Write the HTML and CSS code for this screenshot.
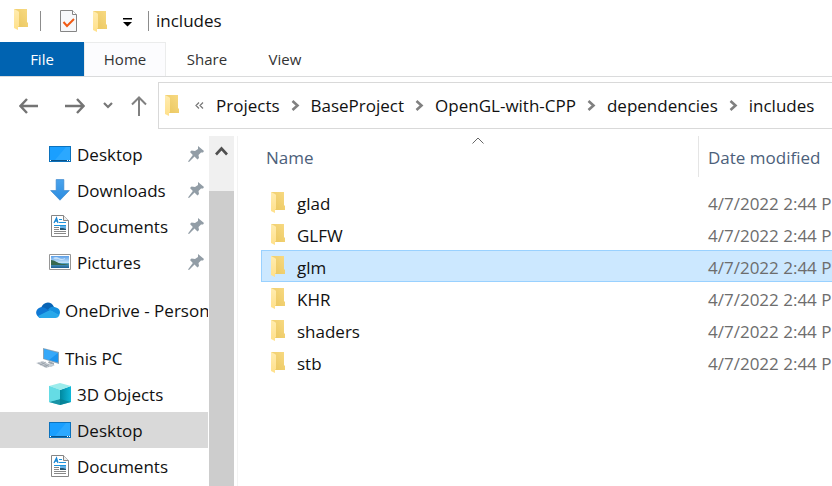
FILE: index.html
```html
<!DOCTYPE html>
<html lang="en">
<head>
<meta charset="utf-8">
<title>includes</title>
<link rel="stylesheet" href="styles.css">
</head>
<body>
<svg class="defs" aria-hidden="true">
  <defs>
    <linearGradient id="back" x1="0" y1="1" x2="1" y2="0"><stop offset="0" stop-color="#e9c55c"/><stop offset="1" stop-color="#f8da83"/></linearGradient>
    <linearGradient id="front" x1="0" y1="0" x2="0" y2="1"><stop offset="0" stop-color="#ffecb0"/><stop offset="1" stop-color="#ffe08a"/></linearGradient>
    <linearGradient id="arrow" x1="0" y1="0" x2="0" y2="1"><stop offset="0" stop-color="#4aa3ec"/><stop offset="1" stop-color="#2b8ce0"/></linearGradient>
    <linearGradient id="sky" x1="0" y1="0" x2="0" y2="1"><stop offset="0" stop-color="#5c9fe8"/><stop offset="1" stop-color="#d9f0fb"/></linearGradient>
    <linearGradient id="sea" x1="0" y1="0" x2="0" y2="1"><stop offset="0" stop-color="#5aa8c8"/><stop offset="1" stop-color="#1d5f94"/></linearGradient>
    <linearGradient id="cubeR" x1="0" y1="0" x2="1" y2="0"><stop offset="0" stop-color="#00889f"/><stop offset="1" stop-color="#10b9da"/></linearGradient>
  </defs>
  <symbol id="folder" viewBox="0 0 14 21">
    <path d="M0 0h13v13l1 1v4H3z" fill="url(#back)"/>
    <path d="M0 0l4 2 1 1v14l-1 1v3l-4-2z" fill="url(#front)"/>
  </symbol>
  <symbol id="desktop" viewBox="0 0 22 16">
    <path d="M0 0h22v16H0z" fill="#0c72bd"/><path d="M1 1h20v13H1z" fill="#1a9fff"/>
    <path d="M17 1h4v13H6z" fill="#3aaeff" opacity=".55"/><path d="M1 14h20v1H1z" fill="#0a5288"/>
    <path d="M1 14h1v1H1zM18 14h1v1h-1zM20 14h1v1h-1z" fill="#fff"/>
  </symbol>
  <symbol id="download" viewBox="0 0 20 20">
    <path d="M6.5.5h7v10h5L10 19.300 1.500 10.500h5z" fill="url(#arrow)" stroke="#3a86cc" stroke-width=".6"/>
  </symbol>
  <symbol id="document" viewBox="0 0 18 22">
    <path d="M.5.5h12l5 5v16H.5z" fill="#fff" stroke="#858585"/><path d="M12.500.5v5h5" fill="#eee" stroke="#858585"/>
    <path d="M3 8l2.500-5L7 8M4 6h3" fill="none" stroke="#1987d4" stroke-width="1.300"/>
    <path d="M8 4.500h3M8 7.500h7M3 10.500h12" stroke="#1c95df"/>
    <path d="M3 12.500h5M3 14.500h5M3 16.500h12M3 18.500h12" stroke="#888"/>
    <path d="M9 11h6v4H9z" fill="#69b4e8"/><path d="M9 13l3 0 3 1v1H9z" fill="#24546f"/>
  </symbol>
  <symbol id="picture" viewBox="0 0 22 16">
    <path d="M.5.5h21v15H.5z" fill="#fff" stroke="#969696"/><path d="M2 2h18v8H2z" fill="url(#sky)"/>
    <path d="M2 9h18v5H2z" fill="url(#sea)"/><path d="M2 6c4 0 6 3 11 4 3 0 5 0 7 1H2z" fill="#37694f"/>
    <path d="M4 4q3-2 6 0t6 0v1q-4 2-7 0-3 1-5-1" fill="#eff9ff" opacity=".6"/>
  </symbol>
  <symbol id="cloud" viewBox="0 0 24 16">
    <path d="M5 6C7-.5 15-2 18 5l-3 5-8-1z" fill="#0864b5"/>
    <path d="M2 14.500C-2 11 1 5 6 5.200c3 0 4 1.500 7 3.300L7 16H5q-2 0-3-1.500" fill="#0f78d4"/>
    <path d="M12 8c2-3.500 5-4 8-2.500 4 1 5 5 3 8l-9-5z" fill="#1490df"/>
    <path d="M2 14l12-6 9.400 5q-1 3-4 3H5q-2 0-3-2" fill="#28a8ea"/>
  </symbol>
  <symbol id="pc" viewBox="0 0 24 22">
    <path d="M7 1l16 4v12L7 12z" fill="#8aa4b8"/><path d="M8 2l14 4v9.500L8 11.500z" fill="#1b94ef"/>
    <path d="M8 2l14 4-9 7-5-1.500z" fill="#48b5ff" opacity=".6"/>
    <path d="M13 14l5 2v2l-6-2z" fill="#9ba6af"/><path d="M10 18l4-1 5 1-4 2z" fill="#c1c9cf"/>
    <path d="M0 16l7-2 9 5-6 2z" fill="#c6ccd2"/><path d="M2 16l9 4M5 15l8 4.500M4 18l6-3M8 19.500l5-2" stroke="#8b969f" stroke-width=".6"/>
  </symbol>
  <symbol id="cube" viewBox="0 0 22 22">
    <path d="M0 3l11 4v15L0 19z" fill="#48cddd"/><path d="M22 3L11 7v15l11-3z" fill="url(#cubeR)"/>
    <path d="M0 3l11-3 11 3-11 4z" fill="#9cecec"/><path d="M0 19l11-3 11 3-11 3z" fill="#087f91" opacity=".75"/>
    <path d="M0 3l11 4v9L0 19z" fill="#65dce5"/>
  </symbol>
  <symbol id="pin" viewBox="0 0 16 16">
    <path d="M10 0l6 5-1 1.500h-2L10.500 9l.5 3-1.500 1.500-3-3L1 16l-1-.500L4.800 9 2 6l1.500-1.500 3.500.5L10 3z" fill="#929da6"/>
  </symbol>
  <symbol id="crumb" viewBox="0 0 9 11"><path d="M1.500 1L6.500 5.500 1.500 10" fill="none" stroke="#808080" stroke-width="2.600"/></symbol>
</svg>

<header class="titlebar">
  <svg class="folder app"><use href="#folder"/></svg>
  <span class="divider"></span>
  <button class="tool" aria-label="Properties"><svg width="18" height="22" viewBox="0 0 18 22"><path d="M.5.5h12l4 4v17H.5z" fill="#f7f8fa" stroke="#858585"/><path d="M12.500.5v4h4" fill="#fff" stroke="#858585"/><path d="M3.500 12l3.500 4 7-7" fill="none" stroke="#f15a13" stroke-width="2"/></svg></button>
  <button class="tool" aria-label="New folder"><svg class="folder"><use href="#folder"/></svg></button>
  <button class="tool menu" aria-label="Customize toolbar"><svg width="10" height="9" viewBox="0 0 10 9"><path d="M0 0h9v1.500H0zM0 4h9L4.500 8.500z" fill="#000"/></svg></button>
  <span class="divider"></span>
  <h1>includes</h1>
</header>

<nav class="tabs">
  <button class="tab file">File</button>
  <button class="tab home">Home</button>
  <button class="tab share">Share</button>
  <button class="tab view">View</button>
</nav>

<div class="navbar">
  <div class="history">
    <button aria-label="Back"><svg width="20" height="16" viewBox="0 0 20 16"><path d="M19 8H2M8 1L1.500 8 8 15" fill="none" stroke="#747474" stroke-width="2.400"/></svg></button>
    <button aria-label="Forward"><svg width="20" height="16" viewBox="0 0 20 16"><path d="M0 8h18M12 1l6.500 7L12 15" fill="none" stroke="#747474" stroke-width="2.400"/></svg></button>
    <button aria-label="Recent"><svg width="10" height="7" viewBox="0 0 10 7"><path d="M1 1l4 4 4-4" fill="none" stroke="#777" stroke-width="2.200"/></svg></button>
    <button aria-label="Up"><svg width="16" height="20" viewBox="0 0 16 20"><path d="M8 20V2M1 8.500L8 1.500l7 7" fill="none" stroke="#808080" stroke-width="2"/></svg></button>
  </div>
  <div class="address">
    <svg class="folder"><use href="#folder"/></svg>
    <button class="more" aria-label="More"><svg width="9" height="7" viewBox="0 0 9 7"><path d="M4 .5l-3 3 3 3M8 .5l-3 3 3 3" fill="none" stroke="#777" stroke-width="1.200"/></svg></button>
    <a href="#">Projects</a><svg class="sep"><use href="#crumb"/></svg>
    <a href="#">BaseProject</a><svg class="sep"><use href="#crumb"/></svg>
    <a href="#">OpenGL-with-CPP</a><svg class="sep"><use href="#crumb"/></svg>
    <a href="#">dependencies</a><svg class="sep"><use href="#crumb"/></svg>
    <a href="#">includes</a>
  </div>
</div>

<div class="body">
  <aside class="sidebar">
    <a class="item child" href="#"><svg class="ico"><use href="#desktop"/></svg><span>Desktop</span><svg class="pin"><use href="#pin"/></svg></a>
    <a class="item child" href="#"><svg class="ico"><use href="#download"/></svg><span>Downloads</span><svg class="pin"><use href="#pin"/></svg></a>
    <a class="item child" href="#"><svg class="ico"><use href="#document"/></svg><span>Documents</span><svg class="pin"><use href="#pin"/></svg></a>
    <a class="item child" href="#"><svg class="ico"><use href="#picture"/></svg><span>Pictures</span><svg class="pin"><use href="#pin"/></svg></a>
    <a class="item root" href="#"><svg class="ico"><use href="#cloud"/></svg><span>OneDrive - Personal</span></a>
    <a class="item root" href="#"><svg class="ico"><use href="#pc"/></svg><span>This PC</span></a>
    <a class="item child" href="#"><svg class="ico"><use href="#cube"/></svg><span>3D Objects</span></a>
    <a class="item child current" href="#"><svg class="ico"><use href="#desktop"/></svg><span>Desktop</span></a>
    <a class="item child" href="#"><svg class="ico"><use href="#document"/></svg><span>Documents</span></a>
  </aside>
  <div class="scrollbar">
    <button aria-label="Scroll up"><svg width="13" height="10" viewBox="0 0 13 10"><path d="M1 8.500L6.500 2.500 12 8.500" fill="none" stroke="#505050" stroke-width="2.600"/></svg></button>
    <div class="thumb"></div>
  </div>
  <main class="files">
    <table>
      <thead>
        <tr><th class="name">Name<svg class="sort" viewBox="0 0 12 7"><path d="M.5 6.500L6 1l5.500 5.500" fill="none" stroke="#666"/></svg></th><th class="date">Date modified</th></tr>
      </thead>
      <tbody>
        <tr><td><div><svg class="folder"><use href="#folder"/></svg>glad</div></td><td>4/7/2022 2:44 PM</td></tr>
        <tr><td><div><svg class="folder"><use href="#folder"/></svg>GLFW</div></td><td>4/7/2022 2:44 PM</td></tr>
        <tr class="selected"><td><div><svg class="folder"><use href="#folder"/></svg>glm</div></td><td>4/7/2022 2:44 PM</td></tr>
        <tr><td><div><svg class="folder"><use href="#folder"/></svg>KHR</div></td><td>4/7/2022 2:44 PM</td></tr>
        <tr><td><div><svg class="folder"><use href="#folder"/></svg>shaders</div></td><td>4/7/2022 2:44 PM</td></tr>
        <tr><td><div><svg class="folder"><use href="#folder"/></svg>stb</div></td><td>4/7/2022 2:44 PM</td></tr>
      </tbody>
    </table>
  </main>
</div>
</body>
</html>
```

FILE: styles.css
```css
* { box-sizing: border-box; }

body {
  margin: 0;
  height: 100vh;
  display: flex;
  flex-direction: column;
  overflow: hidden;
  background: #fff;
  color: #111;
  font: 17px/24px "Open Sans", "Noto Sans", sans-serif;
}

.defs { position: absolute; width: 0; height: 0; }
svg { flex: none; display: block; }
button { border: 0; padding: 0; background: none; font: inherit; color: inherit; }
a { color: inherit; text-decoration: none; white-space: nowrap; }
.folder { width: 14px; height: 21px; }

.titlebar { display: flex; align-items: center; height: 42px; padding-left: 14px; }
.app { margin-bottom: 3px; }
.divider { width: 1px; height: 20px; background: #8c8c8c; }
.titlebar .divider { margin-left: 12px; }
.titlebar h1 { margin: 0 0 0 7px; font-size: 17px; font-weight: 400; }
.tool { margin-left: 15px; }
.tool:nth-of-type(1) { margin-left: 19px; }
.menu { margin-left: 16px; padding-top: 3px; }
.titlebar .tool + .divider { margin-left: 15px; }

.tabs { display: flex; height: 35px; border-bottom: 1px solid #dadbdc; font-size: 15px; }
.tab { width: 82px; padding-bottom: 2px; border: 1px solid transparent; border-bottom: 0; color: #333; }
.file { width: 84px; background: #0063b1; color: #fff; }
.home { border-color: #ebecec; background: #fcfcfe; }
.view { width: 74px; }

.navbar { display: flex; align-items: center; padding: 5px 0 7px; }
.history { display: flex; align-items: center; width: 158px; padding-left: 19px; }
.history button + button { margin-left: 18px; }
.history button:nth-child(2) { margin-left: 26px; }
.address { flex: 1; display: flex; align-items: center; height: 47px; padding-left: 6px; border: 1px solid #d9d9d9; border-right: 0; overflow: hidden; color: #111; }
.more { margin: 0 12px 0 16px; }
.sep { width: 9px; height: 11px; margin: 0 11px; }

.body { flex: 1; display: flex; min-height: 0; }
.sidebar { width: 208px; overflow: hidden; }
.item { display: flex; align-items: center; height: 36px; padding-left: 48px; }
.root { padding-left: 36px; margin-top: 12px; }
.ico { width: 24px; height: 22px; padding: 0 1px; }
.root .ico { padding: 0; }
.item span { margin-left: 5px; padding-top: 2px; }
.pin { width: 16px; height: 16px; margin: 0 4px 0 auto; }
.current { background: #d9d9d9; }

.scrollbar { display: flex; flex-direction: column; width: 25px; margin-left: 1px; background: #f0f0f0; }
.scrollbar button { height: 55px; padding: 10px 0 0 6px; display: flex; }
.thumb { flex: 1; background: #cdcdcd; }

.files { flex: 1; min-width: 0; margin-left: 3px; padding-left: 23px; border-left: 1px solid #f3f3f3; overflow: hidden; }
table { width: 100%; table-layout: fixed; border-collapse: separate; border-spacing: 0; }
th { position: relative; height: 41px; padding: 2px 5px 0; text-align: left; font-weight: 400; color: #4c607a; white-space: nowrap; }
.name { width: 438px; border-right: 1px solid #e5e5e5; }
th.date, td + td { padding-left: 9px; }
.sort { position: absolute; top: 1px; left: 50%; width: 12px; height: 7px; margin-left: -8px; }
tbody::before { content: ""; display: block; height: 9px; }
td { height: 32px; padding: 4px 0 0; white-space: nowrap; overflow: hidden; }
td + td { color: #6d6d6d; }
td div { display: flex; align-items: center; gap: 12px; height: 24px; padding-left: 10px; }
td .folder { margin-bottom: 4px; }
.selected td { background: #cce8ff; border: solid #99d1ff; border-width: 1px 0; }
.selected td:first-child { border-left-width: 1px; }
.selected td div { padding-left: 9px; }
```
